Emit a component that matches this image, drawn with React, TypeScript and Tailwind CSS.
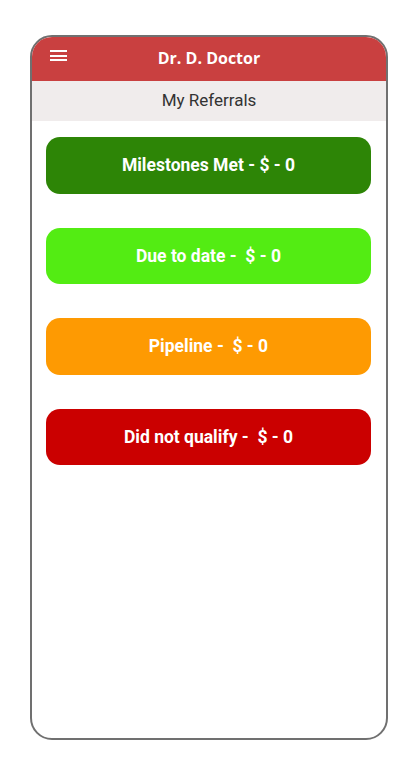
import React from 'react';

const CARDS = [
  { label: 'Milestones Met - $ - 0', bg: 'bg-[#2d8506]' },
  { label: 'Due to date -  $ - 0', bg: 'bg-[#53ec13]' },
  { label: 'Pipeline -  $ - 0', bg: 'bg-[#fe9a02]' },
  { label: 'Did not qualify -  $ - 0', bg: 'bg-[#cb0000]' },
];

export default function App() {
  return (
    <div className="w-[418px] h-[770px] bg-white pt-[35px] pl-[30px]">
      <div className="w-[358px] h-[705px] rounded-[22px] border-2 border-[#707070] overflow-hidden flex flex-col">
        {/* Header */}
        <div className="relative h-[44px] bg-[#c94040] flex items-center justify-center shrink-0 pb-[3px]">
          <button className="absolute left-[18px] top-[13px] flex flex-col gap-[2.5px]">
            <span className="block w-[17px] h-[2px] bg-white" />
            <span className="block w-[17px] h-[2px] bg-white" />
            <span className="block w-[17px] h-[2px] bg-white" />
          </button>
          <h1 className="text-white font-bold text-[16px] font-['Open_Sans',sans-serif]">Dr. D. Doctor</h1>
        </div>

        {/* Sub header */}
        <div className="h-[40px] bg-[#f0ecec] flex items-center justify-center shrink-0">
          <span className="text-[17px] text-[#333] font-['Roboto',sans-serif]">My Referrals</span>
        </div>

        {/* Cards */}
        <div className="flex flex-col gap-[34px] pt-[16px] pl-[14px] pr-[15px]">
          {CARDS.map((c) => (
            <div
              key={c.label}
              className={`${c.bg} h-[56.5px] rounded-[14px] flex items-center justify-center`}
            >
              <span className="text-white font-bold text-[17.5px] font-['Roboto',sans-serif] whitespace-pre">
                {c.label}
              </span>
            </div>
          ))}
        </div>
      </div>
    </div>
  );
}
